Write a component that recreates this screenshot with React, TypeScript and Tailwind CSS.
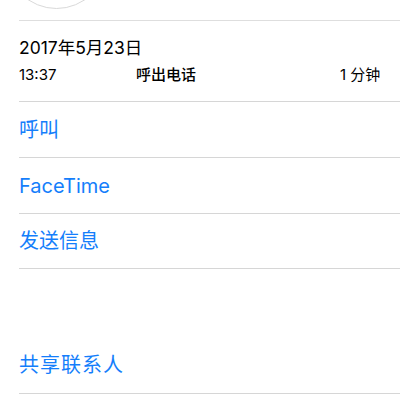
import React from "react";

export default function App() {
  const font = { fontFamily: 'Inter, "Noto Sans CJK SC", sans-serif' };
  return (
    <div className="w-[400px] h-[400px] bg-white overflow-hidden relative" style={font}>
      <div className="absolute left-[6px] top-[-92px] w-[101px] h-[101px] rounded-full border border-[#d9d9d9] bg-white" />
      <div className="h-[20px]" />
      <div className="ml-[19px] border-t border-[#dedede]">
        <div className="h-[80px] flex flex-col">
          <div className="h-[25px] mt-[14px] flex items-center text-[17.5px] text-black leading-none">2017年5月23日</div>
          <div className="h-[20px] mt-[4px] flex items-center text-[15px] text-black leading-none">
            <span className="w-[117px]">13:37</span>
            <span className="font-medium w-[204px]">呼出电话</span>
            <span>1 分钟</span>
          </div>
        </div>
        <div className="border-t border-[#d6d6d6] h-[56px] flex items-center text-[20px] text-[#147efb]">呼叫</div>
        <div className="border-t border-[#d6d6d6] h-[56px] flex items-center text-[20px] text-[#147efb]">FaceTime</div>
        <div className="border-t border-[#d6d6d6] h-[55px] flex items-center text-[20px] text-[#147efb]">发送信息</div>
        <div className="border-t border-[#d6d6d6] h-[69px]" />
        <div className="h-[56px] flex items-center text-[20px] text-[#147efb] tracking-[1px]">共享联系人</div>
        <div className="border-t border-[#d6d6d6]" />
      </div>
    </div>
  );
}
